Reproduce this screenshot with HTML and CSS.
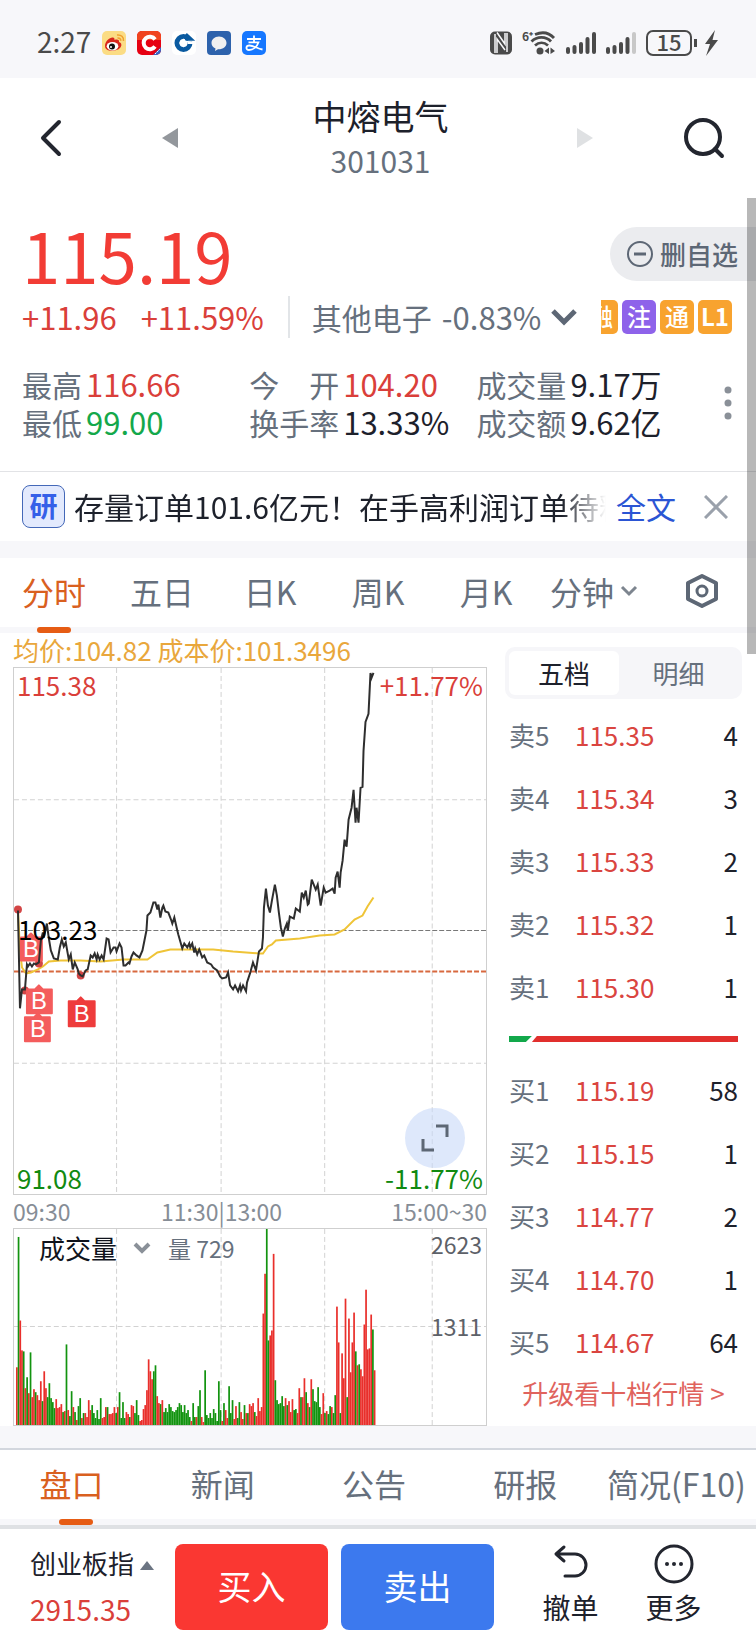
FILE: index.html
```html
<!DOCTYPE html>
<html lang="zh-CN">
<head>
    <meta charset="UTF-8">
    <meta name="viewport" content="width=device-width, initial-scale=1.0">
    <title>中熔电气 301031</title>
    <link rel="stylesheet" href="styles.css">
</head>
<body>
    <!-- Phone status bar -->
    <div class="status-bar">
        <div class="status-left">
            <span class="clock">2:27</span>
            <svg class="app-icon" viewBox="0 0 24 24">
                <rect width="24" height="24" rx="5" fill="#fbdc84"/>
                <path d="M3 15C3 10 8 6 11 6.500C13 7 12.500 9 12.500 9C15 8 17.500 8.500 17 11C20 12 20 15 18 17C15 20.500 3 21.500 3 15Z" fill="#d8261c"/>
                <ellipse cx="10.500" cy="15.200" rx="5.800" ry="4.200" fill="#fff"/>
                <circle cx="10" cy="15.500" r="3" fill="#111"/>
                <circle cx="9" cy="16" r="1" fill="#fff"/>
                <path d="M15 4C19 3.500 22 6 21.500 10M15.500 7C17.500 6.800 19 8 18.700 9.800" fill="none" stroke="#f0a030" stroke-width="1.500"/>
            </svg>
            <svg class="app-icon" viewBox="0 0 24 24">
                <rect width="24" height="24" rx="5" fill="#e60012"/>
                <path d="M0 5A5 5 0 0 1 5 0H19A5 5 0 0 1 24 5V9H0Z" fill="#f0441e"/>
                <path d="M18 8.500A6.200 6.200 0 1 0 18 15.500" fill="none" stroke="#fff" stroke-width="4"/>
                <path d="M24 16V19A5 5 0 0 1 19 24H16Z" fill="#3466c8"/>
                <path d="M18 23L23 18" stroke="#fff" stroke-dasharray="2 1"/>
            </svg>
            <svg class="app-icon" viewBox="0 0 24 24">
                <rect width="24" height="24" rx="5" fill="#fff"/>
                <circle cx="11.500" cy="12" r="6.500" fill="none" stroke="#0a5aa0" stroke-width="5"/>
                <path d="M12 12L24 4V9.500L16 11V13H24V9Z" fill="#fff"/>
                <path d="M14 3L20 8.500H13" fill="none" stroke="#0a5aa0" stroke-width="2.500"/>
                <path d="M11.500 7.500L16 12L11.500 16.500L7 12Z" fill="#fff"/>
            </svg>
            <svg class="app-icon" viewBox="0 0 24 24">
                <rect width="24" height="24" rx="4" fill="#2d62ac"/>
                <path d="M12 5.500C7.500 5.500 4.500 8.500 4.500 12C4.500 14.500 6 16.500 8.500 17.500L8 20L11 18.300C16 18.500 19.500 15.500 19.500 12C19.500 8.500 16.500 5.500 12 5.500Z" fill="#f0f0f0"/>
            </svg>
            <svg class="app-icon" viewBox="0 0 24 24">
                <rect width="24" height="24" rx="5" fill="#1677ff"/>
                <path d="M5 8H19M12 4.500V11M6.500 11.300H16.500C15 16 11 19 7 19C3.500 19 3.500 14.500 7.500 14.500C11.500 14.500 15 17.500 20.500 18.500" fill="none" stroke="#fff" stroke-width="1.800"/>
            </svg>
        </div>
        <div class="status-right">
            <svg width="22" height="24" viewBox="0 0 22 24">
                <rect width="22" height="23" y="0.500" rx="5" fill="#4a4a4a"/>
                <path d="M5 22V3M17 2V21M7 22V8L15 19M7 1.500L15 13V2" fill="none" stroke="#f8f8fa" stroke-width="1.500"/>
            </svg>
            <svg width="34" height="24" viewBox="0 0 34 24">
                <text x="0" y="10" class="wifi-gen">6⁺</text>
                <path d="M13 3.500C20 0.500 27 1.500 32 7M9.500 10.500C15 5 24 5 29 10.500M13 14.500C17 11 22 11 26 14.500" fill="none" stroke="#4a4a4a" stroke-width="2.800"/>
                <circle cx="18" cy="20" r="3.500" fill="#4a4a4a"/>
                <path d="M27 16.500V23L22.500 20ZM28.500 16.500V23L33 20Z" fill="#4a4a4a"/>
            </svg>
            <svg width="30" height="24" viewBox="0 0 30 24" fill="none" stroke="#4a4a4a" stroke-width="4" stroke-linecap="round">
                <path d="M2 18V21M8.500 16V21M15 13V21M21.500 8V21M28 3V21"/>
            </svg>
            <svg width="30" height="24" viewBox="0 0 30 24" fill="none" stroke="#4a4a4a" stroke-width="4" stroke-linecap="round">
                <path d="M2 18V21M8.500 16V21M15 13V21M21.500 8V21"/>
                <path d="M28 3V21" stroke="#c8c8c8"/>
            </svg>
            <span class="battery">15</span>
            <svg width="14" height="26" viewBox="0 0 14 26"><path d="M11 0L1 14H6L2 26L14 10H8.500Z" fill="#4a4a4a"/></svg>
        </div>
    </div>

    <!-- Title bar -->
    <header class="title-bar">
        <button class="icon-btn" aria-label="返回">
            <svg width="22" height="38" viewBox="0 0 22 38"><path d="M19 3L3 19L19 35" fill="none" stroke="#23262f" stroke-width="4" stroke-linecap="round" stroke-linejoin="round"/></svg>
        </button>
        <button class="icon-btn prev" aria-label="上一只">
            <svg width="16" height="20" viewBox="0 0 16 20"><path d="M16 0V20L0 10Z" fill="#93979c"/></svg>
        </button>
        <div class="stock-name">
            <h1>中熔电气</h1>
            <p>301031</p>
        </div>
        <button class="icon-btn next" aria-label="下一只">
            <svg width="16" height="20" viewBox="0 0 16 20"><path d="M0 0V20L16 10Z" fill="#dfe1e3"/></svg>
        </button>
        <button class="icon-btn" aria-label="搜索">
            <svg width="42" height="42" viewBox="0 0 42 42" fill="none" stroke="#23262f" stroke-width="4" stroke-linecap="round"><circle cx="20" cy="20" r="17"/><path d="M32 32L39 39"/></svg>
        </button>
    </header>

    <!-- Quote -->
    <section class="quote">
        <div class="price-row">
            <span class="price">115.19</span>
            <button class="remove-btn">
                <svg width="28" height="28" viewBox="0 0 28 28" fill="none" stroke="#5d6775" stroke-width="2"><circle cx="14" cy="14" r="12"/><path d="M8 14H20" stroke-width="3"/></svg>
                删自选
            </button>
        </div>
        <div class="change-row">
            <span class="change">+11.96</span>
            <span class="change">+11.59%</span>
            <button class="sector">其他电子 <span class="sector-change">-0.83%</span>
                <svg width="26" height="18" viewBox="0 0 26 18"><path d="M2 3L13 14L24 3" fill="none" stroke="#5d6775" stroke-width="5"/></svg>
            </button>
            <div class="tags">
                <span class="tag">融</span>
                <span class="tag purple">注</span>
                <span class="tag">通</span>
                <span class="tag bold">L1</span>
            </div>
        </div>
        <div class="stats">
            <dl>
                <dt>最高</dt><dd class="red">116.66</dd>
                <dt>最低</dt><dd class="green">99.00</dd>
            </dl>
            <dl>
                <dt>今　开</dt><dd class="red">104.20</dd>
                <dt>换手率</dt><dd>13.33%</dd>
            </dl>
            <dl>
                <dt>成交量</dt><dd>9.17万</dd>
                <dt>成交额</dt><dd>9.62亿</dd>
            </dl>
            <button class="more-dots" aria-label="更多数据">
                <svg width="8" height="34" viewBox="0 0 8 34" fill="#8a9098"><circle cx="4" cy="4" r="3.500"/><circle cx="4" cy="17" r="3.500"/><circle cx="4" cy="30" r="3.500"/></svg>
            </button>
        </div>
    </section>

    <!-- Research news -->
    <section class="news">
        <span class="news-badge">研</span>
        <p class="news-text">存量订单101.6亿元！在手高利润订单待释</p>
        <a href="#">全文</a>
        <button class="icon-btn" aria-label="关闭">
            <svg width="24" height="24" viewBox="0 0 24 24"><path d="M1 1L23 23M23 1L1 23" stroke="#9aa1ab" stroke-width="3"/></svg>
        </button>
    </section>

    <nav class="tabs period-tabs">
        <a href="#" class="active">分时</a>
        <a href="#">五日</a>
        <a href="#">日K</a>
        <a href="#">周K</a>
        <a href="#">月K</a>
        <a href="#">分钟<svg width="18" height="12" viewBox="0 0 18 12"><path d="M2 2L9 9L16 2" fill="none" stroke="#7d858f" stroke-width="3"/></svg></a>
        <a href="#" aria-label="设置"><svg width="34" height="36" viewBox="0 0 34 36" fill="none" stroke="#5d6775" stroke-width="4" stroke-linejoin="round"><path d="M17 3L31 10V26L17 33L3 26V10Z"/><circle cx="17" cy="18" r="5" stroke-width="3"/></svg></a>
    </nav>

    <main class="market">
        <div class="charts">
            <p class="legend">均价:104.82 成本价:101.3496</p>

            <div class="chart price-chart">
                <svg viewBox="0 0 474 527" preserveAspectRatio="none">
                    <path class="grid" d="M103 0V527M208 0V527M312 0V527M420 0V527M0 132H474M0 396H474"/>
                    <path class="base-line" d="M0 263H474"/>
                    <path class="cost-line" d="M0 304H474"/>
                    <polyline class="avg-line" points="4,243 6,283 8,300 12,306 17,305 24,302 29,299 35,294 47,293 67,293 87,294 110,292 134,292 144,285 157,282 177,282 200,282 220,284 246,286 250,286 255,279 259,277 263,273 287,271 307,268 322,267 332,262 342,252 350,248 355,239 361,230"/>
                    <g class="marker-dots">
                        <circle cx="4" cy="242" r="4"/>
                        <circle cx="11" cy="323" r="4"/>
                        <circle cx="25" cy="296" r="4"/>
                        <circle cx="67" cy="308" r="4"/>
                    </g>
                    <g class="markers">
                        <path d="M7 270H13L17 266L21 270H28V293H7Z"/>
                        <path d="M13 322H21L25 318L29 322H38V346H13Z"/>
                        <path d="M11 350H20L24 346L28 350H36V374H11Z"/>
                        <path class="solid" d="M55 334H63L67 330L71 334H81V359H55Z"/>
                    </g>
                    <polyline class="price-line" points="4,243 6,341 8,322 11,322 13,297 14,299 16,296 18,299 20,296 22,297 25,295 27,273 29,265 30,270 33,256 35,271 37,283 40,291 44,292 46,280 48,272 50,279 52,275 55,292 57,287 59,302 61,295 64,302 65,306 67,308 69,309 72,303 74,302 77,288 79,290 81,286 83,292 84,287 86,292 88,288 90,292 93,271 95,272 97,285 100,280 102,280 103,284 106,276 108,280 110,298 112,298 115,295 116,296 118,289 120,285 123,288 126,290 129,283 131,273 133,263 134,248 137,245 140,235 142,235 144,242 145,237 147,250 149,240 150,238 152,244 155,245 158,253 159,256 161,250 164,263 165,267 169,281 171,276 174,280 176,276 177,280 179,276 181,285 182,281 184,287 186,282 189,290 191,288 194,295 198,297 200,300 204,303 207,309 209,311 213,310 215,305 217,318 220,322 222,318 225,324 227,318 228,323 230,318 233,324 234,315 237,306 240,295 243,303 246,284 249,281 250,270 251,240 253,221 255,238 257,245 259,233 262,217 264,228 266,245 268,260 270,269 272,261 274,256 275,263 277,249 281,251 283,241 287,244 289,225 291,230 293,223 295,237 296,236 299,212 303,222 305,217 308,238 311,220 313,225 317,223 320,221 322,226 323,210 325,204 327,220 328,205 330,193 332,172 334,179 336,152 339,140 341,122 343,155 344,140 346,155 348,120 350,119 351,83 353,54 356,46 358,5 359,10 361,5"/>
                    <g class="marker-text">
                        <text x="17" y="290">B</text>
                        <text x="25" y="342">B</text>
                        <text x="24" y="370">B</text>
                        <text x="68" y="355">B</text>
                    </g>
                </svg>
                <span class="label top-left red">115.38</span>
                <span class="label top-right red">+11.77%</span>
                <span class="label mid-left">103.23</span>
                <span class="label bottom-left dark-green">91.08</span>
                <button class="expand-btn" aria-label="全屏">
                    <svg width="28" height="28" viewBox="0 0 28 28" fill="none" stroke="#5d6775" stroke-width="3"><path d="M15 2H26V13M2 15V26H13"/></svg>
                </button>
                <span class="label bottom-right dark-green">-11.77%</span>
            </div>

            <div class="time-axis">
                <span>09:30</span>
                <span>11:30|13:00</span>
                <span>15:00~30</span>
            </div>

            <div class="chart volume-chart">
                <svg viewBox="0 0 474 197" preserveAspectRatio="none">
                    <path class="grid" d="M103 0V197M208 0V197M312 0V197M420 0V197M0 98H474"/>
                    <g id="volume-bars"></g>
                </svg>
                <div class="volume-head">
                    <button class="indicator">成交量
                        <svg width="18" height="12" viewBox="0 0 18 12"><path d="M2 2L9 9L16 2" fill="none" stroke="#8a9098" stroke-width="4"/></svg>
                    </button>
                    <span>量 729</span>
                </div>
                <span class="label volume-max">2623</span>
                <span class="label volume-mid">1311</span>
            </div>
        </div>

        <aside class="order-book">
            <div class="switch">
                <button class="selected">五档</button>
                <button>明细</button>
            </div>
            <table>
                <tr><th>卖5</th><td>115.35</td><td>4</td></tr>
                <tr><th>卖4</th><td>115.34</td><td>3</td></tr>
                <tr><th>卖3</th><td>115.33</td><td>2</td></tr>
                <tr><th>卖2</th><td>115.32</td><td>1</td></tr>
                <tr><th>卖1</th><td>115.30</td><td>1</td></tr>
            </table>
            <div class="ratio-bar">
                <span class="sell-part"></span>
                <span class="buy-part"></span>
            </div>
            <table>
                <tr><th>买1</th><td>115.19</td><td>58</td></tr>
                <tr><th>买2</th><td>115.15</td><td>1</td></tr>
                <tr><th>买3</th><td>114.77</td><td>2</td></tr>
                <tr><th>买4</th><td>114.70</td><td>1</td></tr>
                <tr><th>买5</th><td>114.67</td><td>64</td></tr>
            </table>
            <a href="#" class="upgrade">升级看十档行情 &gt;</a>
        </aside>
    </main>

    <nav class="tabs info-tabs">
        <a href="#" class="active">盘口</a>
        <a href="#">新闻</a>
        <a href="#">公告</a>
        <a href="#">研报</a>
        <a href="#">简况(F10)</a>
    </nav>

    <!-- Trade bar -->
    <footer class="trade-bar">
        <button class="index">
            <span>创业板指 <svg width="14" height="9" viewBox="0 0 14 9"><path d="M7 0L14 9H0Z" fill="#6b7482"/></svg></span>
            <span class="red index-value">2915.35</span>
        </button>
        <button class="trade buy">买入</button>
        <button class="trade sell">卖出</button>
        <button class="action">
            <svg width="40" height="40" viewBox="0 0 40 40" fill="none" stroke="#23262f" stroke-width="3" stroke-linecap="round" stroke-linejoin="round"><path d="M13 3L5 10L13 17M5 10H24A11 11 0 0 1 24 32H14"/></svg>
            撤单
        </button>
        <button class="action">
            <svg width="40" height="40" viewBox="0 0 40 40"><circle cx="20" cy="20" r="18" fill="none" stroke="#23262f" stroke-width="3"/><g fill="#23262f"><circle cx="13" cy="20" r="2"/><circle cx="20" cy="20" r="2"/><circle cx="27" cy="20" r="2"/></g></svg>
            更多
        </button>
    </footer>

    <div class="scroll-thumb"></div>

    <script src="script.js"></script>
</body>
</html>
```
FILE: styles.css
```css
/* General */
* {
    box-sizing: border-box;
}

body {
    position: relative;
    margin: 0;
    font-family: "Noto Sans CJK SC", sans-serif;
    font-size: 30px;
    line-height: 38px;
    color: #1d212b;
    background-color: #f7f7fa;
}

h1, p, dl, dd {
    margin: 0;
}

button {
    padding: 0;
    border: none;
    background: none;
    font: inherit;
    color: inherit;
    cursor: pointer;
}

a {
    color: inherit;
    text-decoration: none;
}

svg {
    flex: none;
}

.red {
    color: #da3f3a;
}

.green {
    color: #14a84b;
}

.dark-green {
    color: #118a11;
}

/* Status bar */
.status-bar {
    display: flex;
    justify-content: space-between;
    height: 78px;
    padding: 8px 38px 0 37px;
    color: #4a4a4a;
}

.status-left,
.status-right {
    display: flex;
    align-items: center;
    gap: 11px;
}

.status-right {
    gap: 10px;
}

.clock {
    font-size: 28px;
    line-height: 30px;
    padding-bottom: 4px;
}

.app-icon {
    width: 24px;
    height: 24px;
}

.wifi-gen {
    font-size: 12px;
    font-weight: 700;
    fill: #4a4a4a;
}

.battery {
    position: relative;
    width: 46px;
    height: 26px;
    margin-right: 2px;
    border: 2px solid #4a4a4a;
    border-radius: 7px;
    font-size: 22px;
    font-weight: 500;
    line-height: 19px;
    text-align: center;
}

.battery::after {
    content: "";
    position: absolute;
    right: -7px;
    top: 7px;
    width: 3px;
    height: 8px;
    background-color: #4a4a4a;
}

/* Title bar */
.title-bar {
    display: flex;
    align-items: center;
    height: 120px;
    padding: 0 31px 0 40px;
    background-color: #fff;
}

.icon-btn {
    display: flex;
}

.prev {
    margin-left: 100px;
}

.next {
    margin-right: 90px;
}

.stock-name {
    flex: 1;
    padding-left: 6px;
    text-align: center;
}

.stock-name h1 {
    font-size: 34px;
    font-weight: 400;
    line-height: 44px;
}

.stock-name p {
    line-height: 44px;
    color: #66707d;
}

/* Quote */
.quote {
    height: 274px;
    padding-top: 19px;
    border-bottom: 1px solid #e2e3e6;
    background-color: #fff;
}

.price-row {
    display: flex;
    align-items: center;
    justify-content: space-between;
    height: 74px;
    padding-left: 22px;
}

.price {
    font-size: 69px;
    line-height: 74px;
    color: #f23c35;
}

.remove-btn {
    display: flex;
    align-items: center;
    gap: 6px;
    width: 146px;
    height: 54px;
    padding-left: 16px;
    border-radius: 27px 0 0 27px;
    background-color: #ebecef;
    color: #5d6775;
    font-size: 26px;
    font-weight: 500;
    white-space: nowrap;
}

.change-row {
    display: flex;
    align-items: center;
    gap: 24px;
    height: 52px;
    padding: 0 24px 0 22px;
}

.change {
    font-size: 31px;
    color: #da3f3a;
}

.sector {
    display: flex;
    align-items: center;
    gap: 10px;
    height: 42px;
    padding-left: 22px;
    border-left: 2px solid #e2e5e8;
    color: #66707d;
    white-space: nowrap;
}

.sector-change {
    font-size: 31px;
}

.tags {
    display: flex;
    flex: 1;
    justify-content: flex-end;
    gap: 4px;
    overflow: hidden;
}

.tag {
    flex: none;
    width: 34px;
    height: 34px;
    border-radius: 5px;
    background-color: #f8a32f;
    color: #fff;
    font-size: 24px;
    font-weight: 500;
    line-height: 32px;
    text-align: center;
}

.tag.purple {
    background-color: #8e63ea;
}

.tag.bold {
    font-weight: 700;
}

.stats {
    display: grid;
    grid-template-columns: 32% 32% 1fr auto;
    padding: 22px 24px 0 22px;
}

.stats dl {
    display: grid;
    grid-template-columns: auto auto;
    justify-content: start;
    column-gap: 4px;
}

.stats dt {
    color: #66707d;
}

.stats dd {
    font-size: 31px;
}

.more-dots {
    display: flex;
    align-items: center;
}

/* News */
.news {
    display: flex;
    align-items: center;
    height: 69px;
    padding: 0 28px 0 22px;
    background-color: #fff;
}

.news-badge {
    width: 43px;
    height: 43px;
    border: 1px solid #4468b8;
    border-radius: 8px;
    background-color: #e3eafd;
    color: #3560e8;
    font-size: 28px;
    font-weight: 700;
    line-height: 38px;
    text-align: center;
}

.news-text {
    flex: 1;
    min-width: 0;
    margin: 0 10px 2px 9px;
    overflow: hidden;
    white-space: nowrap;
    -webkit-mask-image: linear-gradient(to left, transparent, #000 44px);
    mask-image: linear-gradient(to left, transparent, #000 44px);
}

.news a {
    margin: 0 28px 2px 0;
    color: #2b55d4;
}

/* Tabs */
.tabs {
    display: flex;
    height: 75px;
    border-bottom: 6px solid #f7f7fa;
    background-color: #fff;
    font-size: 32px;
    color: #66707d;
}

.tabs a {
    position: relative;
    display: flex;
    flex: 1;
    align-items: center;
    justify-content: center;
    gap: 6px;
    padding-bottom: 3px;
    white-space: nowrap;
}

.tabs .active {
    color: #d9601f;
}

.tabs .active::after {
    content: "";
    position: absolute;
    left: calc(50% - 17px);
    bottom: -6px;
    width: 34px;
    height: 6px;
    border-radius: 3px;
    background-color: #e65c14;
}

.period-tabs {
    margin-top: 17px;
}

.info-tabs {
    height: 77px;
    margin-top: 22px;
    border-top: 2px solid #d3d7de;
}

.info-tabs a {
    padding-right: 8px;
}

/* Market */
.market {
    display: flex;
    gap: 18px;
    padding: 0 14px 0 13px;
    background-color: #fff;
}

.charts {
    flex: 2;
}

.legend {
    font-size: 26px;
    line-height: 34px;
    color: #e9a73c;
}

.chart {
    position: relative;
    border: 1px solid #cfcfcf;
    font-size: 26px;
    line-height: 34px;
}

.chart > svg {
    display: block;
    width: 100%;
    height: 100%;
}

.price-chart {
    height: 528px;
}

.volume-chart {
    height: 198px;
}

.grid {
    fill: none;
    stroke: #d2d2d2;
    stroke-dasharray: 5 3;
}

.base-line {
    stroke: #777;
    stroke-dasharray: 5 2;
}

.cost-line {
    stroke: #d8693f;
    stroke-width: 2;
    stroke-dasharray: 5 2;
}

.price-line,
.avg-line {
    fill: none;
    stroke: #2e2e2e;
    stroke-width: 2;
}

.avg-line {
    stroke: #efc437;
}

.marker-dots {
    fill: #d34545;
}

.markers {
    fill: #f45c5c;
    stroke: #f45c5c;
    stroke-width: 2;
    stroke-linejoin: round;
}

.markers .solid {
    fill: #ee3c3c;
    stroke: #ee3c3c;
}

.marker-text {
    fill: #fff;
    font-family: "Liberation Sans", sans-serif;
    font-size: 24px;
    text-anchor: middle;
}

.label {
    position: absolute;
}

.top-left {
    top: 0;
    left: 3px;
}

.top-right {
    top: 0;
    right: 3px;
}

.mid-left {
    top: 244px;
    left: 4px;
    color: #000;
}

.bottom-left {
    bottom: -1px;
    left: 3px;
}

.bottom-right {
    bottom: -1px;
    right: 3px;
}

.expand-btn {
    position: absolute;
    right: 21px;
    bottom: 26px;
    display: flex;
    align-items: center;
    justify-content: center;
    width: 60px;
    height: 60px;
    border-radius: 50%;
    background-color: rgba(200, 217, 248, 0.6);
}

.time-axis {
    display: grid;
    grid-template-columns: 22% 44% 1fr;
    font-size: 23px;
    line-height: 33px;
    color: #868d96;
}

.time-axis span:nth-child(2) {
    text-align: center;
}

.time-axis span:last-child {
    text-align: right;
}

.volume-head {
    position: absolute;
    top: 2px;
    left: 25px;
    display: flex;
    gap: 17px;
    font-size: 23px;
    color: #66707d;
}

.indicator {
    display: flex;
    align-items: center;
    gap: 16px;
    font-size: 26px;
    color: #0f131c;
}

.volume-max,
.volume-mid {
    right: 4px;
    font-size: 23px;
    color: #5d6168;
}

.volume-max {
    top: -2px;
}

.volume-mid {
    top: 80px;
}

.volume-up {
    fill: #e92f2b;
}

.volume-down {
    fill: #12930f;
}

/* Order book */
.order-book {
    flex: 1;
    padding-top: 14px;
    font-size: 26px;
}

.switch {
    display: flex;
    height: 52px;
    padding: 4px;
    border-radius: 10px;
    background-color: #f6f6f9;
    color: #66707d;
}

.switch button {
    flex: 1;
    border-radius: 6px;
}

.switch .selected {
    flex: 0 0 48%;
    background-color: #fff;
    color: #1d212b;
}

.order-book table {
    width: 100%;
    margin-top: 4px;
    border-collapse: collapse;
}

.order-book tr {
    height: 63px;
}

.order-book th,
.order-book td {
    padding: 0;
    font-weight: 400;
    text-align: left;
}

.order-book th {
    width: 70px;
    padding-left: 4px;
    color: #66707d;
}

.order-book td {
    color: #da4540;
}

.order-book td:last-child {
    padding-right: 4px;
    color: #1d212b;
    text-align: right;
}

.ratio-bar {
    display: flex;
    height: 6px;
    margin: 18px 4px 16px;
}

.sell-part {
    width: 10%;
    background-color: #12a84b;
    clip-path: polygon(0 0, 100% 0, calc(100% - 6px) 100%, 0 100%);
}

.buy-part {
    flex: 1;
    background-color: #e12f2d;
    clip-path: polygon(5px 0, 100% 0, 100% 100%, 0 100%);
}

.upgrade {
    display: block;
    line-height: 40px;
    color: #e0635d;
    text-align: center;
}

/* Trade bar */
.trade-bar {
    display: flex;
    height: 107px;
    padding: 15px 31px 2px 30px;
    border-top: 4px solid #dfe1e4;
    background-color: #fff;
    font-size: 28px;
}

.index {
    display: flex;
    flex-direction: column;
    justify-content: space-between;
    align-items: flex-start;
    flex: 145;
    padding-bottom: 2px;
    font-size: 26px;
    white-space: nowrap;
}

.index svg {
    margin-bottom: 4px;
}

.index-value {
    font-size: 28px;
}

.trade {
    flex: 153;
    margin-right: 13px;
    padding-bottom: 2px;
    border-radius: 8px;
    color: #fff;
    font-size: 34px;
}

.buy {
    background-color: #fa3732;
}

.sell {
    margin-right: 25px;
    background-color: #3c79ee;
}

.action {
    display: flex;
    flex: 103;
    flex-direction: column;
    justify-content: space-between;
    align-items: center;
    padding-bottom: 4px;
}

/* Scroll position */
.scroll-thumb {
    position: absolute;
    top: 198px;
    right: 0;
    width: 9px;
    height: 456px;
    background-color: rgba(0, 0, 0, 0.28);
}
```
FILE: script.js
```javascript
// One entry per minute: bar height, then r (up) or g (down)
const volumes = `58r 189g 105r 75r 74g 37r 48g 32r 73g 28r 36r 33g 30r 25r 44r 24g 54r 37r 28g 42g
27g 23g 17g 26r 17r 18r 21r 13g 14r 81g 15r 9g 34g 18r 13g 5r 19g 27g 7r 12g
12r 8r 25r 15r 20g 12g 7g 15g 6g 27g 7r 8r 18r 18g 11r 11r 12r 18r 12g 18r
33g 7g 23g 7g 13r 11r 8g 20r 19r 12g 25g 10g 4r 5r 16r 20r 35r 66r 54r 46r
54g 60g 29r 22r 21g 25r 13g 17g 13g 21g 18g 14g 13g 15g 18g 22g 20g 13g 20g 12g
15g 8g 4r 22g 8g 8r 19g 35g 8r 3r 55g 10g 7g 12g 7g 16g 12g 4g 44g 15g
4r 22g 15r 7r 39g 12g 25g 6r 19r 7g 23g 13r 6r 20g 12r 12g 21r 19r 22r 13g
9r 27r 14r 18r 112r 152r 197g 85g 90r 95r 172r 45g 25g 21g 22g 29g 19g 27r 20g 24r
13r 26r 15g 16g 12r 37r 28g 28r 47r 33g 22r 18g 46r 36g 24g 23g 38g 18g 11r 32r
12g 14r 11g 19g 18r 12g 30g 119r 83r 12g 72r 47r 127r 28g 107r 53r 83r 113r 74g 60r
61g 56r 49r 101r 136r 76r 77r 111r 96g 55r`.split(/\s+/);

const group = document.getElementById('volume-bars');
const step = 361 / volumes.length;

volumes.forEach((item, i) => {
    const height = parseInt(item);
    const bar = document.createElementNS('http://www.w3.org/2000/svg', 'rect');
    bar.setAttribute('x', 2 + i * step);
    bar.setAttribute('y', 197 - height);
    bar.setAttribute('width', step);
    bar.setAttribute('height', height);
    bar.setAttribute('class', item.endsWith('r') ? 'volume-up' : 'volume-down');
    group.appendChild(bar);
});
```
